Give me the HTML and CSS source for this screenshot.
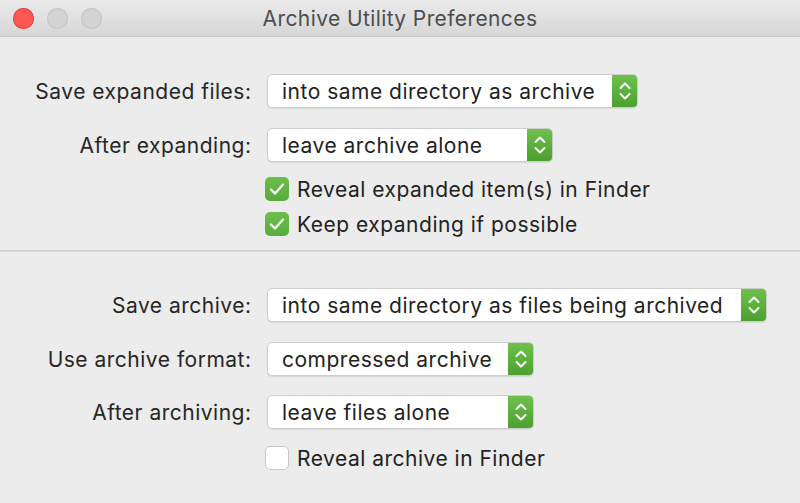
FILE: index.html
```html
<!DOCTYPE html>
<html>
<head>
<meta charset="utf-8">
<link rel="stylesheet" href="styles.css">
</head>
<body>
<div class="window">
  <div class="titlebar">
    <div class="lights">
      <span class="light red"></span>
      <span class="light"></span>
      <span class="light"></span>
    </div>
    <div class="title">Archive Utility Preferences</div>
  </div>
  <div class="section first">
    <div class="row popup-row">
      <div class="label">Save expanded files:</div>
      <div class="popup w1"><span class="ptext">into same directory as archive</span><span class="stepper"><svg viewBox="0 0 26 34" width="26" height="34"><path d="M8.5 14 L13 9.5 L17.5 14 M8.5 20 L13 24.5 L17.5 20" fill="none" stroke="#fff" stroke-width="2" stroke-linecap="round" stroke-linejoin="round"/></svg></span></div>
    </div>
    <div class="row popup-row r2">
      <div class="label">After expanding:</div>
      <div class="popup w2"><span class="ptext">leave archive alone</span><span class="stepper"><svg viewBox="0 0 26 34" width="26" height="34"><path d="M8.5 14 L13 9.5 L17.5 14 M8.5 20 L13 24.5 L17.5 20" fill="none" stroke="#fff" stroke-width="2" stroke-linecap="round" stroke-linejoin="round"/></svg></span></div>
    </div>
    <div class="row check-row c1">
      <div class="label"></div>
      <div class="check"><span class="box on"><svg viewBox="0 0 24 24" width="24" height="24"><path d="M6 12.5 L10 16.5 L18 7.5" fill="none" stroke="#fff" stroke-width="2.2" stroke-linecap="round" stroke-linejoin="round"/></svg></span><span class="ctext">Reveal expanded item(s) in Finder</span></div>
    </div>
    <div class="row check-row c2">
      <div class="label"></div>
      <div class="check"><span class="box on"><svg viewBox="0 0 24 24" width="24" height="24"><path d="M6 12.5 L10 16.5 L18 7.5" fill="none" stroke="#fff" stroke-width="2.2" stroke-linecap="round" stroke-linejoin="round"/></svg></span><span class="ctext">Keep expanding if possible</span></div>
    </div>
  </div>
  <div class="divider"></div>
  <div class="section second">
    <div class="row popup-row">
      <div class="label">Save archive:</div>
      <div class="popup w3"><span class="ptext">into same directory as files being archived</span><span class="stepper"><svg viewBox="0 0 26 34" width="26" height="34"><path d="M8.5 14 L13 9.5 L17.5 14 M8.5 20 L13 24.5 L17.5 20" fill="none" stroke="#fff" stroke-width="2" stroke-linecap="round" stroke-linejoin="round"/></svg></span></div>
    </div>
    <div class="row popup-row r2">
      <div class="label">Use archive format:</div>
      <div class="popup w4"><span class="ptext">compressed archive</span><span class="stepper"><svg viewBox="0 0 26 34" width="26" height="34"><path d="M8.5 14 L13 9.5 L17.5 14 M8.5 20 L13 24.5 L17.5 20" fill="none" stroke="#fff" stroke-width="2" stroke-linecap="round" stroke-linejoin="round"/></svg></span></div>
    </div>
    <div class="row popup-row r3">
      <div class="label">After archiving:</div>
      <div class="popup w4"><span class="ptext">leave files alone</span><span class="stepper"><svg viewBox="0 0 26 34" width="26" height="34"><path d="M8.5 14 L13 9.5 L17.5 14 M8.5 20 L13 24.5 L17.5 20" fill="none" stroke="#fff" stroke-width="2" stroke-linecap="round" stroke-linejoin="round"/></svg></span></div>
    </div>
    <div class="row check-row c3">
      <div class="label"></div>
      <div class="check"><span class="box"></span><span class="ctext">Reveal archive in Finder</span></div>
    </div>
  </div>
</div>
</body>
</html>
```
FILE: styles.css
```css
html, body {
  margin: 0;
  padding: 0;
}
body {
  width: 800px;
  height: 503px;
  overflow: hidden;
  background: #ececec;
  font-family: "Inter", "Liberation Sans", sans-serif;
  color: #222;
}
.window {
  width: 800px;
  height: 503px;
  background: #ececec;
  display: flex;
  flex-direction: column;
}
.titlebar {
  height: 36px;
  border-bottom: 1px solid #c6c6c6;
  background: linear-gradient(#ebebeb, #d6d6d6);
  display: flex;
  align-items: center;
  justify-content: center;
  position: relative;
}
.lights {
  position: absolute;
  left: 13px;
  top: 8px;
  display: flex;
  gap: 13px;
}
.light {
  width: 21px;
  height: 21px;
  border-radius: 50%;
  background: #d3d3d3;
  box-shadow: inset 0 0 0 1px #c4c4c4;
}
.light.red {
  background: #fc5753;
  box-shadow: inset 0 0 0 1px #df4744;
}
.title {
  font-size: 21px;
  color: #4d4d4d;
  padding-top: 1px;
  letter-spacing: 0.4px;
}
.section.first {
  padding-top: 37px;
  height: 176px;
}
.section.second {
  padding-top: 36px;
}
.divider {
  height: 2px;
  background: #d8d8d8;
  border-top: 1px solid #cfcfcf;
  box-sizing: border-box;
}
.row {
  display: grid;
  grid-template-columns: 251px auto;
  column-gap: 16px;
  align-items: center;
}
.popup-row {
  height: 34px;
}
.r2 { margin-top: 20px; }
.r3 { margin-top: 19px; }
.check-row { height: 30px; }
.c1 { margin-top: 12px; }
.c2 { margin-top: 5px; }
.c3 { margin-top: 14px; }
.label {
  text-align: right;
  font-size: 21px;
  color: #262626;
  letter-spacing: 0.5px;
  margin-right: -0.5px;
}
.popup {
  height: 34px;
  box-sizing: border-box;
  background: #fff;
  border: 1px solid #cdcdcd;
  border-radius: 5px;
  box-shadow: 0 1px 1px rgba(0,0,0,0.08);
  display: flex;
  align-items: center;
  justify-content: space-between;
  overflow: hidden;
}
.w1 { width: 371px; }
.w2 { width: 286px; }
.w3 { width: 500px; }
.w4 { width: 267px; }
.ptext {
  font-size: 21px;
  padding-left: 14px;
  color: #222;
  white-space: nowrap;
  letter-spacing: 0.5px;
}
.stepper {
  width: 26px;
  height: 34px;
  flex: none;
  margin: -1px -1px -1px 0;
  background: linear-gradient(#6fc24d, #4b9f2e);
  border-radius: 0 5px 5px 0;
  display: flex;
}
.check {
  display: flex;
  align-items: center;
  margin-left: -2px;
  gap: 8px;
}
.box {
  width: 24px;
  height: 24px;
  border-radius: 5px;
  box-sizing: border-box;
  background: #fff;
  border: 1px solid #c8c8c8;
  display: flex;
}
.box.on {
  background: linear-gradient(#6cbf4c, #58ac3d);
  border: none;
}
.ctext {
  font-size: 21px;
  color: #222;
  letter-spacing: 0.5px;
}
```
